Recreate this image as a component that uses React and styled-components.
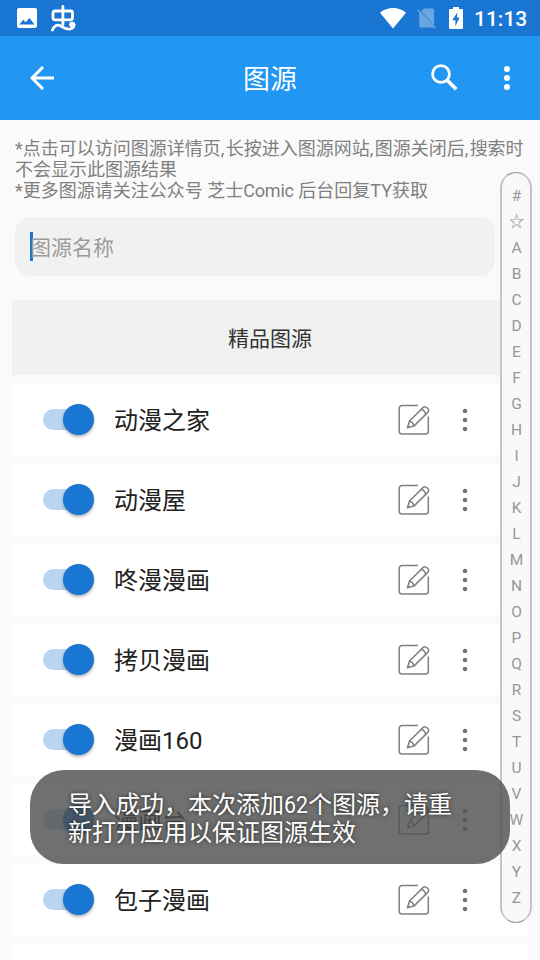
import React from 'react';
import styled, { createGlobalStyle } from 'styled-components';

const GlobalStyle = createGlobalStyle`
  * {
    box-sizing: border-box;
  }

  body {
    margin: 0;
    overflow: hidden;
    background: #fafafa;
    font-family: Roboto, "Noto Sans CJK SC", sans-serif;
  }
`;

const Screen = styled.div`
  position: relative;
  width: 540px;
  height: 960px;
  overflow: hidden;
  background: #fafafa;
`;

const StatusBar = styled.div`
  display: flex;
  align-items: center;
  justify-content: space-between;
  height: 36px;
  padding: 0 12px 0 17px;
  background: #1976d2;
  color: #fff;
`;

const StatusGroup = styled.div`
  display: flex;
  align-items: center;
  gap: ${(props) => props.$gap}px;
  height: 36px;
`;

const Clock = styled.span`
  width: 54px;
  padding-top: 2px;
  font-size: 21px;
  font-weight: 500;
  line-height: 34px;
`;

const Toolbar = styled.header`
  display: grid;
  grid-template-columns: 84px 1fr 32px 31px 32px;
  align-items: center;
  height: 84px;
  padding-right: 17px;
  background: #2196f3;
  color: #fff;
`;

const Title = styled.h1`
  margin: 0;
  padding: 3px 0 0 28px;
  font-size: 27px;
  font-weight: 400;
  line-height: 40px;
  text-align: center;
`;

const IconButton = styled.button`
  display: flex;
  align-items: center;
  justify-content: center;
  padding: 0;
  border: 0;
  background: none;
  color: inherit;

  svg {
    display: block;
  }
`;

const SearchButton = styled(IconButton)`
  padding-bottom: 1px;
`;

const MenuButton = styled(IconButton)`
  grid-column: 5;
`;

const Notice = styled.p`
  height: 97px;
  margin: 0;
  padding: 18px 0 0 15px;
  color: #808080;
  font-size: 18px;
  line-height: 21px;
  white-space: nowrap;
`;

const Spaced = styled.span`
  letter-spacing: ${(props) => props.$by}px;
`;

const SearchField = styled.div`
  display: flex;
  align-items: center;
  width: 480px;
  height: 59px;
  margin-left: 15px;
  padding-left: 15px;
  border-radius: 15px;
  background: #f1f1f1;
  color: #9b9b9b;
  font-size: 21px;
`;

const Placeholder = styled.span`
  padding-top: 2px;
  line-height: 30px;
`;

const Caret = styled.span`
  width: 3px;
  height: 29px;
  margin-right: -3px;
  background: #1976d2;
`;

const List = styled.main`
  display: flex;
  flex-direction: column;
  gap: 9px;
  margin: 24px 12px 0;
`;

const SectionHeader = styled.div`
  height: 75px;
  background: #f1f1f1;
  color: #333;
  font-size: 21px;
  line-height: 78px;
  text-align: center;
`;

const Row = styled.div`
  display: flex;
  align-items: center;
  height: 71px;
  flex-shrink: 0;
  padding-left: 31px;
  background: #fff;
`;

const Track = styled.div`
  display: flex;
  align-items: center;
  justify-content: flex-end;
  width: 51px;
  height: 21px;
  border-radius: 11px;
  background: linear-gradient(90deg, #bad5f1 40px, transparent 40px);
`;

const Thumb = styled.div`
  width: 31px;
  height: 31px;
  border-radius: 50%;
  background: #1976d2;
  box-shadow: 0 2px 3px rgba(0, 0, 0, 0.28);
`;

const SourceName = styled.div`
  width: 304px;
  padding: 2px 0 0 20px;
  color: #212121;
  font-size: 24px;
  line-height: 36px;
`;

const RowActions = styled.div`
  display: flex;
  align-items: center;
  gap: 32px;
  padding-top: 1px;
  color: #757575;
`;

const IndexBar = styled.nav`
  position: absolute;
  top: 172px;
  left: 500px;
  display: flex;
  flex-direction: column;
  width: 32px;
  height: 751px;
  padding-top: 10px;
  border: solid;
  border-width: 1px 2px;
  border-color: #999 #c5c5c5;
  border-radius: 16px;
  background: #f9f9f9;
`;

const IndexLetter = styled.span`
  height: 26px;
  padding-left: 1px;
  color: #979797;
  font-size: 15.5px;
  line-height: 26px;
  text-align: center;
`;

const Toast = styled.div`
  position: absolute;
  top: 770px;
  left: 30px;
  width: 480px;
  height: 94px;
  padding: 21px 0 0 38px;
  border-radius: 34px;
  background: rgba(80, 80, 80, 0.82);
  color: #fff;
  font-size: 24px;
  line-height: 28px;
  text-shadow: 0 0 4px rgba(0, 0, 0, 0.65);
  white-space: nowrap;
`;

const Count = styled.span`
  display: inline-block;
  width: 24px;
  transform: scaleX(0.89);
  transform-origin: left;
`;

const PhotoIcon = () => (
  <svg width="20" height="20" viewBox="0 0 20 20">
    <path fill="#fff" d="M2 0h16a2 2 0 0 1 2 2v16a2 2 0 0 1-2 2H2a2 2 0 0 1-2-2V2a2 2 0 0 1 2-2z" />
    <path fill="#1976d2" d="M2.5 16.5 6.2 11.8 8.6 14.2 12.5 10 17.5 16.5z" />
  </svg>
);

const BugIcon = () => (
  <svg width="25" height="27" viewBox="0 0 25 27" fill="none" stroke="#fff" strokeWidth="2.8" strokeLinecap="round" strokeLinejoin="round">
    <rect x="2" y="6" width="19.5" height="8.8" rx="2" />
    <path d="M11.9 1.5v18" />
    <path d="M1.4 25C3 20.8 6.2 19 9.5 20.8c4 2.2 6.4 4.1 10 3.1 4.6-1.4 4.6-6.2 1.2-5.7-1.7.3-1.7 2.3-.2 2.6" />
  </svg>
);

const WifiIcon = () => (
  <svg width="26" height="21" viewBox="0 0 26 21">
    <path fill="#fff" d="M0 4.7C7.5-1.5 18.5-1.5 26 4.7L13 20.6z" />
  </svg>
);

const NoSimIcon = () => (
  <svg width="19" height="21" viewBox="0 0 19 21" fill="#fff" opacity=".34">
    <path d="M6.8.6H15.6A1.6 1.6 0 0 1 17.2 2.2V17.2L4 3.6z" />
    <path d="M2.2 4.2v13.8A1.6 1.6 0 0 0 3.8 19.6h13.4z" />
    <path d="M0 2.6 1.2 1.4 18.9 19.6 17.7 20.8z" />
  </svg>
);

const BatteryIcon = () => (
  <svg width="14" height="22" viewBox="0 0 14 22">
    <path fill="#fff" d="M4 0h6v2h3q1 0 1 1v18q0 1-1 1H1q-1 0-1-1V3q0-1 1-1h3z" />
    <path fill="#1976d2" d="M8.4 5.5 3.2 13.2H6.4V19.3L10.6 10.6H8z" />
  </svg>
);

const BackIcon = () => (
  <svg width="24" height="24" viewBox="0 0 24 24" fill="none" stroke="#fff" strokeWidth="3">
    <path d="M24 12H3M13 1 2 12l11 11" />
  </svg>
);

const SearchIcon = () => (
  <svg width="27" height="27" viewBox="0 0 27 27" fill="none" stroke="#fff" strokeWidth="2.8">
    <circle cx="10" cy="10" r="8.4" />
    <path strokeWidth="3.6" d="m16.2 16.2 9 9" />
  </svg>
);

const DotsIcon = ({ radius }) => (
  <svg width="6" height="24" viewBox="0 0 6 24" fill="currentColor">
    <circle cx="3" cy="3" r={radius} />
    <circle cx="3" cy="12" r={radius} />
    <circle cx="3" cy="21" r={radius} />
  </svg>
);

const EditIcon = () => (
  <svg width="32" height="32" viewBox="0 0 32 32" fill="none" stroke="#808080" strokeWidth="1.5" strokeLinejoin="round">
    <path d="M20 1.5H4A2.8 2.8 0 0 0 1.2 4.3v22.9A2.8 2.8 0 0 0 4 30h23.5a2.8 2.8 0 0 0 2.8-2.8V12.5" />
    <path d="m9.5 23.7 1.8-6.4L25 3.6c2.6-2.4 7.2 2 4.8 4.8L15.9 22.1z" />
    <path d="M11.3 17.3c2.5.4 4.2 2.1 4.6 4.8M23 5.6c2.3.4 4.2 2.2 4.7 4.7M9.9 22l1.6 1.2" />
  </svg>
);

const sources = ['动漫之家', '动漫屋', '咚漫漫画', '拷贝漫画', '漫画160', '漫画台', '包子漫画', ''];
const letters = ['#', '☆', ...'ABCDEFGHIJKLMNOPQRSTUVWXYZ'];

const Comma = () => <Spaced $by={1.4}>,</Spaced>;

const SourceRow = ({ name }) => (
  <Row>
    {name && (
      <>
        <Track>
          <Thumb />
        </Track>
        <SourceName>{name}</SourceName>
        <RowActions>
          <IconButton>
            <EditIcon />
          </IconButton>
          <IconButton>
            <DotsIcon radius={2.3} />
          </IconButton>
        </RowActions>
      </>
    )}
  </Row>
);

const App = () => {
  return (
    <Screen>
      <GlobalStyle />
      <StatusBar>
        <StatusGroup $gap={14}>
          <PhotoIcon />
          <BugIcon />
        </StatusGroup>
        <StatusGroup $gap={11}>
          <WifiIcon />
          <StatusGroup $gap={13}>
            <NoSimIcon />
            <BatteryIcon />
          </StatusGroup>
          <Clock>11:13</Clock>
        </StatusGroup>
      </StatusBar>
      <Toolbar>
        <IconButton>
          <BackIcon />
        </IconButton>
        <Title>图源</Title>
        <SearchButton>
          <SearchIcon />
        </SearchButton>
        <MenuButton>
          <DotsIcon radius={3} />
        </MenuButton>
      </Toolbar>
      <Notice>
        *点击可以访问图源详情页<Comma />长按进入图源网站<Comma />图源关闭后<Comma />搜索时
        <br />
        不会显示此图源结果
        <br />
        *更多图源请关注公众号 芝士<Spaced $by={-0.2}>Comic</Spaced> 后台回复TY获取
      </Notice>
      <SearchField>
        <Caret />
        <Placeholder>图源名称</Placeholder>
      </SearchField>
      <List>
        <SectionHeader>精品图源</SectionHeader>
        {sources.map((name, i) => (
          <SourceRow key={i} name={name} />
        ))}
      </List>
      <IndexBar>
        {letters.map((letter) => (
          <IndexLetter key={letter}>{letter}</IndexLetter>
        ))}
      </IndexBar>
      <Toast>
        导入成功，本次添加<Count>62</Count>个图源，请重
        <br />
        新打开应用以保证图源生效
      </Toast>
    </Screen>
  );
};

export default App;
